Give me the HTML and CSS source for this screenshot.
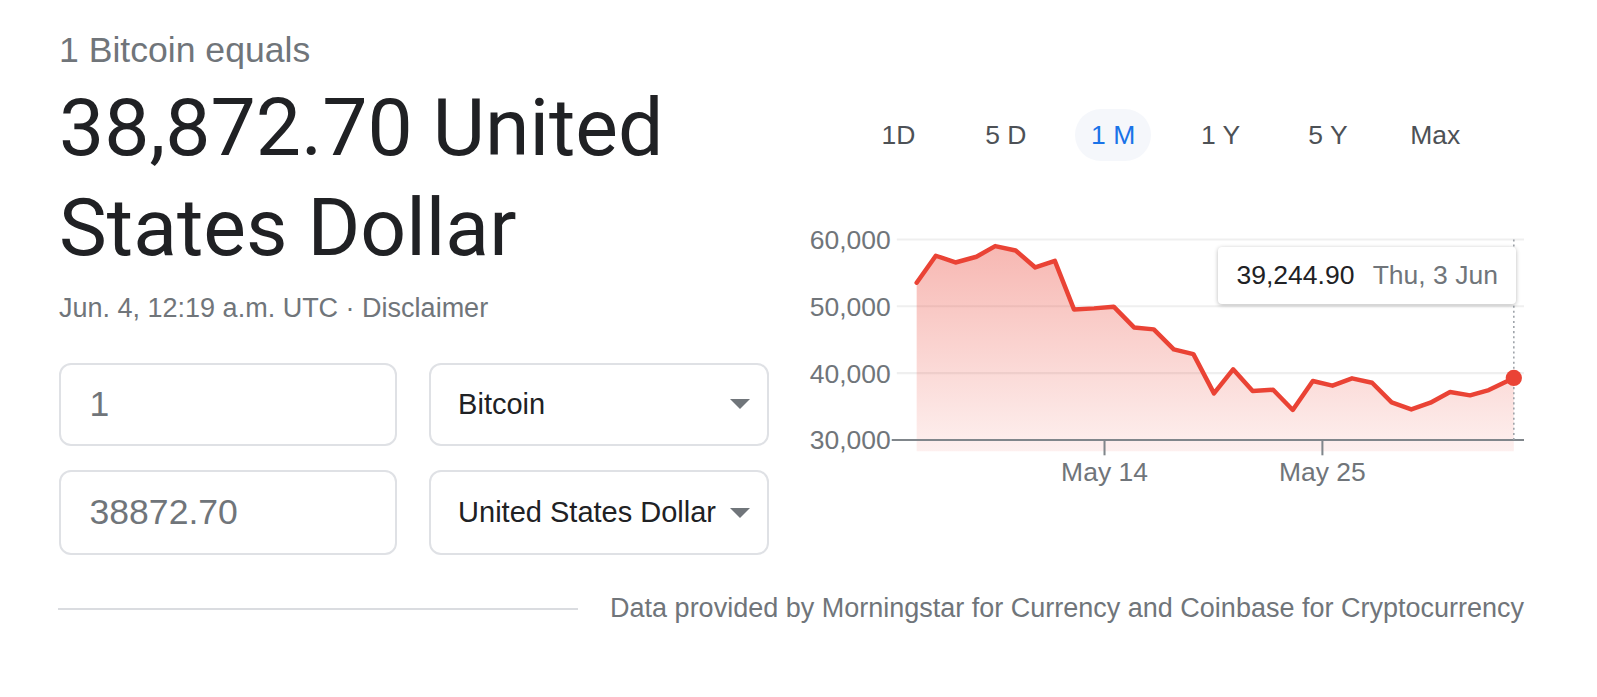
FILE: index.html
```html
<!DOCTYPE html>
<html lang="en">
<head>
<meta charset="utf-8">
<title>Bitcoin to USD</title>
<link rel="stylesheet" href="styles.css">
</head>
<body>
<div class="page">
  <div class="top">
    <div class="left">
      <div class="subtitle">1 Bitcoin equals</div>
      <div class="headline">38,872.70 United States Dollar</div>
      <div class="meta">Jun. 4, 12:19 a.m. UTC · Disclaimer</div>
      <div class="converter">
        <div class="field amount">1</div>
        <div class="field select"><span>Bitcoin</span><span class="arrow"></span></div>
        <div class="field amount">38872.70</div>
        <div class="field select"><span>United States Dollar</span><span class="arrow"></span></div>
      </div>
    </div>
    <div class="right">
      <div class="tabs">
        <div class="tab">1D</div>
        <div class="tab">5 D</div>
        <div class="tab active">1 M</div>
        <div class="tab">1 Y</div>
        <div class="tab">5 Y</div>
        <div class="tab">Max</div>
      </div>
      <div class="chart">
        <svg class="plot" width="729" height="270" viewBox="0 0 716 265" xmlns="http://www.w3.org/2000/svg">
          <defs>
            <linearGradient id="fill" x1="0" y1="0" x2="0" y2="1">
              <stop offset="0" stop-color="#ea4335" stop-opacity="0.38"/>
              <stop offset="1" stop-color="#ea4335" stop-opacity="0.08"/>
            </linearGradient>
          </defs>
          <g class="grid">
            <line x1="100" y1="20" x2="716" y2="20"/>
            <line x1="100" y1="85.7" x2="716" y2="85.7"/>
            <line x1="100" y1="151.3" x2="716" y2="151.3"/>
          </g>
          <g class="ylabels">
            <text x="94" y="29">60,000</text>
            <text x="94" y="95">50,000</text>
            <text x="94" y="161">40,000</text>
            <text x="94" y="226">30,000</text>
          </g>
          <path class="area" d="M119.5,62.5 L138.3,36 L157.6,42.6 L178.2,37 L196.6,26.5 L216.7,30.8 L236,47.5 L255.2,41 L274,88.7 L293.7,87.7 L313,86 L333,106.4 L352.4,108.3 L372,128 L391.3,132.6 L411.5,171.2 L430.3,147.6 L449.5,168.9 L469.6,167.6 L488.9,187.5 L508.6,159 L527.9,163.6 L547.1,156.4 L566.8,160.7 L586,180 L605.3,186.9 L624.1,180.3 L643.4,169.9 L663,173.1 L681.4,167.9 L706,156 L706,228 L119.5,228 Z"/>
          <line class="axis" x1="95" y1="217" x2="716" y2="217"/>
          <line class="tick" x1="304" y1="217" x2="304" y2="232"/>
          <line class="tick" x1="518" y1="217" x2="518" y2="232"/>
          <text class="xlabel" x="304" y="257">May 14</text>
          <text class="xlabel" x="518" y="257">May 25</text>
          <line class="cursor" x1="706" y1="20" x2="706" y2="217"/>
          <polyline class="line" points="119.5,62.5 138.3,36 157.6,42.6 178.2,37 196.6,26.5 216.7,30.8 236,47.5 255.2,41 274,88.7 293.7,87.7 313,86 333,106.4 352.4,108.3 372,128 391.3,132.6 411.5,171.2 430.3,147.6 449.5,168.9 469.6,167.6 488.9,187.5 508.6,159 527.9,163.6 547.1,156.4 566.8,160.7 586,180 605.3,186.9 624.1,180.3 643.4,169.9 663,173.1 681.4,167.9 706,156"/>
          <circle class="dot" cx="706" cy="156" r="8"/>
        </svg>
        <div class="tooltip"><span class="tt-value">39,244.90</span><span class="tt-date">Thu, 3 Jun</span></div>
      </div>
    </div>
  </div>
  <div class="footer">
    <div class="rule"></div>
    <div class="source">Data provided by Morningstar for Currency and Coinbase for Cryptocurrency</div>
  </div>
</div>
</body>
</html>
```

FILE: styles.css
```css
html, body {
  margin: 0;
  padding: 0;
  background: #ffffff;
}

body {
  font-family: "Liberation Sans", Arial, sans-serif;
  color: #202124;
}

.page {
  width: 1465px;
  padding: 29.5px 0 0 59px;
}

.top {
  display: grid;
  grid-template-columns: 710px 729px;
  column-gap: 25.5px;
  align-items: start;
}

.subtitle {
  font-size: 35.6px;
  line-height: 40.7px;
  color: #70757a;
}

.headline {
  margin-top: 8px;
  font-family: Roboto, "Noto Sans", sans-serif;
  font-size: 80.5px;
  line-height: 100px;
  color: #202124;
}

.meta {
  margin-top: 12px;
  font-size: 27px;
  line-height: 36.7px;
  color: #70757a;
}

.converter {
  margin-top: 35.6px;
  display: grid;
  grid-template-columns: 338px 340px;
  grid-template-rows: 83.5px 84.5px;
  column-gap: 31.6px;
  row-gap: 24.4px;
}

.field {
  box-sizing: border-box;
  border: 2px solid #dfe1e5;
  border-radius: 12px;
  display: flex;
  align-items: center;
}

.amount {
  padding-left: 28.5px;
  font-size: 35.6px;
  color: #70757a;
}

.select {
  padding: 0 17px 0 27.5px;
  justify-content: space-between;
  font-size: 29px;
  color: #202124;
}

.arrow {
  width: 0;
  height: 0;
  border-left: 10px solid transparent;
  border-right: 10px solid transparent;
  border-top: 10px solid #70757a;
  margin-left: 10px;
  flex: none;
}

.right {
  display: flex;
  flex-direction: column;
}

.tabs {
  margin-top: 79.5px;
  margin-left: 65.7px;
  display: flex;
  gap: 31px;
}

.tab {
  width: 76.4px;
  height: 52px;
  border-radius: 26px;
  display: flex;
  align-items: center;
  justify-content: center;
  font-size: 26.5px;
  color: #4d5156;
}

.tab.active {
  background: #f5f7fb;
  color: #1a73e8;
}

.chart {
  position: relative;
  margin-top: 58px;
  width: 729px;
  height: 270px;
}

.plot {
  display: block;
  font-family: "Liberation Sans", Arial, sans-serif;
}

.grid line {
  stroke: #efefef;
  stroke-width: 2;
}

.ylabels text {
  font-size: 26px;
  fill: #70757a;
  text-anchor: end;
}

.xlabel {
  font-size: 26px;
  fill: #70757a;
  text-anchor: middle;
}

.area {
  fill: url(#fill);
}

.axis {
  stroke: #80868b;
  stroke-width: 2;
}

.tick {
  stroke: #80868b;
  stroke-width: 2;
}

.cursor {
  stroke: #9aa0a6;
  stroke-width: 1.5;
  stroke-dasharray: 2 3;
}

.line {
  fill: none;
  stroke: #ea4335;
  stroke-width: 4.4;
  stroke-linejoin: round;
  stroke-linecap: round;
}

.dot {
  fill: #ea4335;
}

.tooltip {
  position: absolute;
  left: 423.7px;
  top: 27.5px;
  width: 297.4px;
  height: 57px;
  box-sizing: border-box;
  padding-left: 18.3px;
  background: #ffffff;
  border-radius: 4px;
  box-shadow: 0 1px 4px rgba(0, 0, 0, 0.28);
  display: flex;
  align-items: center;
  gap: 18.3px;
  font-size: 26.5px;
  white-space: nowrap;
}

.tt-value {
  color: #202124;
}

.tt-date {
  color: #70757a;
}

.footer {
  margin-top: 35.6px;
  display: flex;
  align-items: center;
  justify-content: space-between;
  height: 36.7px;
}

.rule {
  width: 520px;
  height: 2px;
  background: #dadce0;
  margin-left: -1px;
}

.source {
  font-size: 27px;
  line-height: 36.7px;
  color: #70757a;
}
```
